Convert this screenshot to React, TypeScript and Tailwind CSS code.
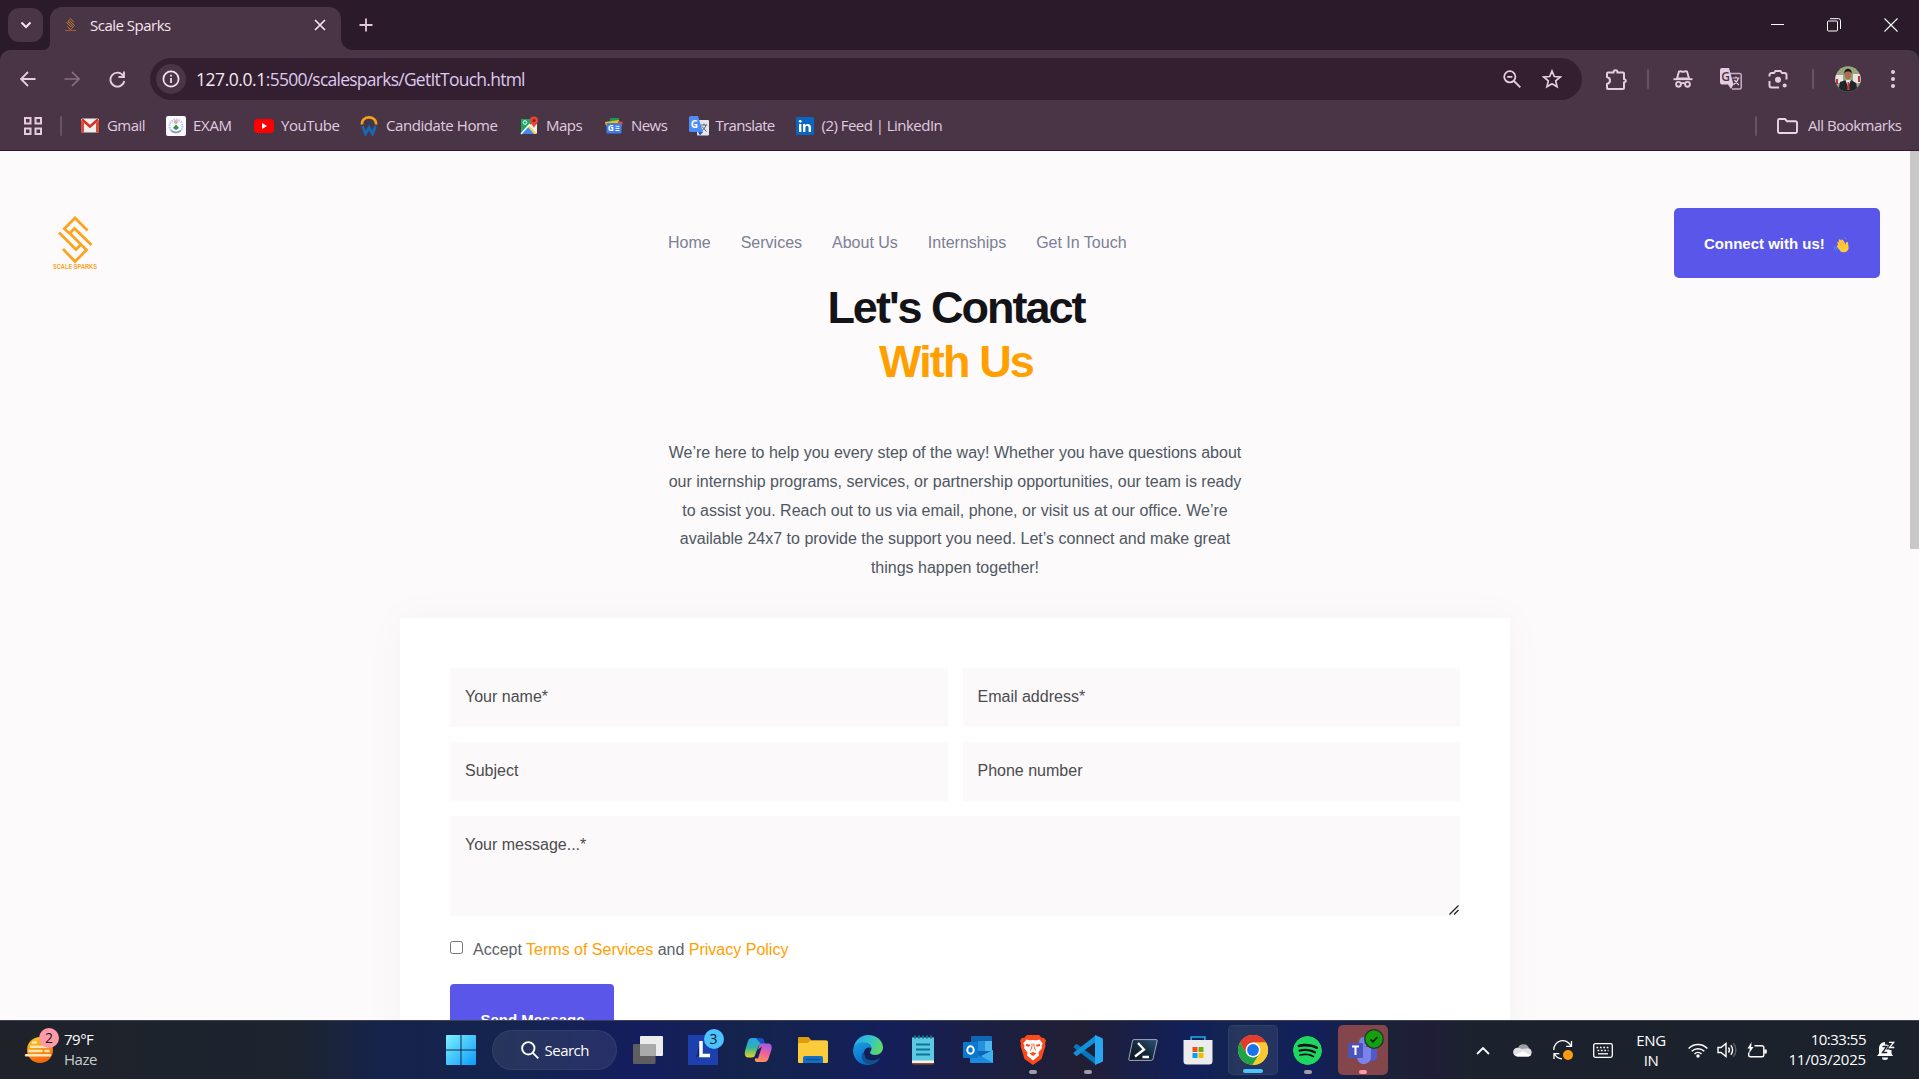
import React from "react";
import type { ReactNode } from "react";
import { SiSpotify } from "react-icons/si";

const SEGOE = "font-['Open_Sans','Noto_Sans',sans-serif]";

/* ---------- brand mark ---------- */

function SparksMark({ className }: { className: string }) {
  return (
    <svg viewBox="0 0 44 54" className={className} fill="none" stroke="#fda21f" strokeWidth="2.700">
      <path d="M34.500 14.500 22 2 11.300 12.700 16.500 17.500" />
      <path d="M6 16.500 23 33.500 27.500 29" />
      <path d="M16.500 17.500 21.500 12.500 38.500 29" />
      <path d="M16.500 17 33.500 34 22 45.500 10 33" />
      <text x="22" y="52.700" textAnchor="middle" fill="#fda21f" stroke="none" fontSize="6.300" fontWeight="700" textLength="44" lengthAdjust="spacingAndGlyphs" fontFamily="Liberation Sans, sans-serif">SCALE SPARKS</text>
    </svg>
  );
}

/* ---------- browser chrome ---------- */

function TabStrip() {
  return (
    <div className="flex h-[50px] shrink-0 items-start bg-[#2b1a29] text-[#f4e4f0]">
      <button className="mt-2 ml-2 flex h-[34px] w-[35px] items-center justify-center rounded-[11px] bg-[#4a3546]">
        <svg viewBox="0 0 12 8" className="h-2 w-3" fill="none" stroke="currentColor" strokeWidth="2"><path d="M1.500 1.500 6 6l4.500-4.500" /></svg>
      </button>
      <div className="flex h-[50px] items-end">
        <div className="h-3 w-[7px] overflow-hidden bg-[#4a3546]"><div className="h-3 w-[7px] rounded-br-[12px] bg-[#2b1a29]" /></div>
      </div>
      <div className="mt-[7px] flex h-[43px] w-[291px] items-center rounded-t-[12px] bg-[#4a3546] pb-2">
        <SparksMark className="ml-[15px] h-[14px] w-[11px]" />
        <span className="mt-[2px] ml-[14px] w-[82px] text-[15px] tracking-[-0.5px] whitespace-nowrap">Scale Sparks</span>
        <svg viewBox="0 0 12 12" className="ml-[142px] h-3 w-3" fill="none" stroke="currentColor" strokeWidth="1.700"><path d="m1 1 10 10M11 1 1 11" /></svg>
      </div>
      <div className="flex h-[50px] items-end">
        <div className="h-3 w-3 bg-[#4a3546]"><div className="h-3 w-3 rounded-bl-[12px] bg-[#2b1a29]" /></div>
      </div>
      <svg viewBox="0 0 14 14" className="mt-[18px] ml-[6px] h-[14px] w-[14px]" fill="none" stroke="#e2c8dc" strokeWidth="1.800"><path d="M7 .5v13M.5 7h13" /></svg>
      <div className="mt-[18px] ml-auto flex h-[13px] items-center text-white">
        <div className="h-px w-[13px] bg-white" />
        <svg viewBox="0 0 14 14" className="ml-[43px] h-[14px] w-[14px]" fill="none" stroke="currentColor"><rect x=".5" y="3" width="10" height="10" rx="1" /><path d="M3 .7h8.500a2 2 0 0 1 2 2V11" /></svg>
        <svg viewBox="0 0 14 14" className="mr-[21px] ml-[43px] h-[14px] w-[14px]" fill="none" stroke="currentColor" strokeWidth="1.100"><path d="m.5.5 13 13M13.500.5l-13 13" /></svg>
      </div>
    </div>
  );
}

function Divider({ className }: { className: string }) {
  return <div className={`h-5 w-[2px] rounded-full bg-[#6b5066] ${className}`} />;
}

function AddressRow() {
  return (
    <div className="flex h-[58px] items-center text-[#e6cce0]">
      <svg viewBox="0 0 16 16" className="ml-[20px] h-4 w-4" fill="none" stroke="currentColor" strokeWidth="1.800"><path d="M15.500 8H1.500M8 1 1 8l7 7" /></svg>
      <svg viewBox="0 0 16 16" className="ml-[28px] h-4 w-4 text-[#896f83]" fill="none" stroke="currentColor" strokeWidth="1.700"><path d="M.5 8h14M8 1l7 7-7 7" /></svg>
      <svg viewBox="0 0 17 17" className="ml-[29px] h-[17px] w-[17px]" fill="none" stroke="currentColor" strokeWidth="1.900"><path d="M14.200 4.600A7 7 0 1 0 15.300 10M15 .5V6H9.500" /></svg>
      <div className="ml-[24px] flex h-[42px] w-[1432px] items-center rounded-full bg-[#331f2f]">
        <div className="ml-[6px] flex h-[30px] w-[30px] items-center justify-center rounded-full bg-[#4a3546]">
          <svg viewBox="0 0 18 18" className="h-[18px] w-[18px]" fill="none" stroke="#f2e2ee" strokeWidth="1.700"><circle cx="9" cy="9" r="7.600" /><path d="M9 8v5M9 4.700v1.800" /></svg>
        </div>
        <span className="mt-px ml-[10px] text-[17.500px] tracking-[-0.75px] whitespace-nowrap text-[#ddc9ee]"><span className="tracking-[-0.45px] text-[#f5e9f4]">127.0.0.1</span>:5500/scalesparks/GetItTouch.html</span>
        <svg viewBox="0 0 18 18" className="ml-auto h-[18px] w-[18px]" fill="none" stroke="currentColor" strokeWidth="1.800"><circle cx="6.800" cy="6.800" r="5.600" /><path d="m11 11 6.300 6.300M4.200 6.800h5.200" /></svg>
        <svg viewBox="0 0 20 20" className="mr-[20px] ml-[21px] h-5 w-5" fill="none" stroke="currentColor" strokeWidth="1.700"><path d="m10 2 2.300 5.500 6 .5-4.600 3.900 1.400 5.900L10 14.700l-5.100 3.100 1.400-5.900L1.700 8l6-.5z" /></svg>
      </div>
      <svg viewBox="0 0 21 21" className="ml-[24px] h-[21px] w-[21px]" fill="none" stroke="currentColor" strokeWidth="2"><path d="M2 3.500h5.500c0-3 4-3 4 0H17a1 1 0 0 1 1 1v5.500c2.500.5 2.500 3 0 3.500v5.500a1 1 0 0 1-1 1H2a1 1 0 0 1-1-1V15c4-1 4-6 0-7V4.500a1 1 0 0 1 1-1z" /></svg>
      <Divider className="ml-[20px]" />
      <svg viewBox="0 0 20 18" className="ml-[24px] h-[18px] w-5" fill="none" stroke="currentColor" strokeWidth="1.900"><path d="M.5 9.200h19" /><path d="M4 8.500 6 1.500c1.600-.8 2.500.3 4 .3s2.400-1.100 4-.3l2 7z" /><circle cx="5.500" cy="14.300" r="2.400" /><circle cx="14.500" cy="14.300" r="2.400" /><path d="M8 13.500q2-1 4 0" /></svg>
      <svg viewBox="0 0 22 22" className="ml-[27px] h-[22px] w-[22px]">
        <path d="M9.500 5.500h10.200a1.500 1.500 0 0 1 1.500 1.500v12.500a1.500 1.500 0 0 1-1.500 1.500H12" fill="none" stroke="#c9afc4" strokeWidth="1.500" />
        <path d="M2 0h7l4.500 16.500H2a2 2 0 0 1-2-2V2a2 2 0 0 1 2-2zM8 16.500h5.500L11 21z" fill="currentColor" />
        <text x="1.300" y="12.800" fontSize="12" fontWeight="600" fill="#4a3546" fontFamily="Open Sans, sans-serif">G</text>
        <path d="M12.500 10h7M16 8.500V10m2.500 0q-1 4-5 6.500m.8-4.500 4.500 5" fill="none" stroke="currentColor" strokeWidth="1.200" />
      </svg>
      <svg viewBox="0 0 20 20" className="ml-[26px] h-5 w-5" fill="none" stroke="currentColor" strokeWidth="2"><path d="M1.500 7.500V6a2 2 0 0 1 2-2H6l1.500-2h5L14 4h2.500a2 2 0 0 1 2 2v4.500M1.500 12v4.500a2 2 0 0 0 2 2H11" /><circle cx="10" cy="10.800" r="3" fill="currentColor" stroke="none" /><circle cx="16.700" cy="16.500" r="2" fill="currentColor" stroke="none" /></svg>
      <Divider className="ml-[24px]" />
      <svg viewBox="0 0 26 26" className="ml-[21px] h-[26px] w-[26px]">
        <clipPath id="avatar"><circle cx="13" cy="13" r="12.700" /></clipPath>
        <g clipPath="url(#avatar)">
          <rect width="26" height="26" fill="#9ca67e" />
          <path d="M0 9h8v8H0zM18 8h8v9h-8z" fill="#e8e6e4" /><path d="M1 13h2v5H1zM23 10h2v6h-2z" fill="#b8323a" />
          <path d="M3 26 5 16l6-2h5l5 3 2 9z" fill="#20252c" /><path d="m10.500 14 2.500 7 3-7z" fill="#e9e3e2" /><path d="M12.500 16h1.600l.6 8h-2.500z" fill="#c43a3c" />
          <ellipse cx="13" cy="8.500" rx="3.500" ry="5" fill="#a96f4f" /><path d="M9 8c0-7 8-7 8 0-1-3-6-4-8 0z" fill="#17120f" />
        </g>
      </svg>
      <svg viewBox="0 0 4 18" className="ml-[30px] h-[18px] w-1" fill="currentColor"><circle cx="2" cy="2" r="2" /><circle cx="2" cy="9" r="2" /><circle cx="2" cy="16" r="2" /></svg>
    </div>
  );
}

function Bookmark({ icon, label, width, text }: { icon: ReactNode; label: string; width: string; text: string }) {
  return (
    <div className={`flex items-center ${width}`}>
      <div className="flex w-[20px] shrink-0 justify-center">{icon}</div>
      <span className={`ml-[7px] whitespace-nowrap ${text}`}>{label}</span>
    </div>
  );
}

const GmailIcon = (
  <svg viewBox="0 0 20 15" className="h-[15px] w-5"><rect x="1" y="0.500" width="18" height="14" rx="1.500" fill="#eee" /><path d="M1 2.500v11q0 1 1 1h2V5zM19 2.500v11q0 1-1 1h-2V5z" fill="#d54b3d" /><path d="m2 1.500 8 7 8-7" fill="none" stroke="#d93025" strokeWidth="2.600" /></svg>
);
const ExamIcon = (
  <svg viewBox="0 0 20 20" className="h-5 w-5"><rect width="20" height="20" rx="2" fill="#fbfbfd" /><circle cx="10" cy="10" r="6.500" fill="none" stroke="#b9c5e6" strokeWidth="2" strokeDasharray="1.500 1" /><circle cx="10" cy="6" r="2" fill="#e7a2b0" /><path d="m10 8.500 3 3.500-3 2-3-2z" fill="#26953b" /><path d="M5 14.500q5 4 10 0" stroke="#7f8fcb" fill="none" strokeWidth="1.500" /></svg>
);
const YouTubeIcon = (
  <svg viewBox="0 0 20 14" className="h-[14px] w-5"><rect width="20" height="14" rx="3.500" fill="#f00" /><path d="M8 4v6l5-3z" fill="#fff" /></svg>
);
const CandidateIcon = (
  <svg viewBox="0 0 18 20" className="h-5 w-[18px]" fill="none"><path d="M2 8.500C1-1 17-1 16 8.500" stroke="#f5a11b" strokeWidth="2.600" /><circle cx="9" cy="7" r="3" fill="#3b3a52" /><path d="m2.500 10 3 8L9 11.500l3.500 6.500 3-8" stroke="#1767b4" strokeWidth="2.800" /></svg>
);
const MapsIcon = (
  <svg viewBox="0 0 19 20" className="h-5 w-[19px]"><path d="M1 3h15v15H1z" fill="#1fa463" /><path d="M1 18 14 5l3 3v9z" fill="#eef1f2" /><path d="m1 18 7-8 8 8z" fill="#4285f4" /><path d="m7 10 7 8h3l-8-9z" fill="#fbd14b" /><path d="m1 18 9-10" stroke="#fff" strokeWidth="1.500" /><circle cx="5" cy="6.500" r="1.800" fill="none" stroke="#fff" /><path d="M14 12c-1-3-4-4-4-7.500a4 4 0 0 1 8 0C18 8 15 9 14 12z" fill="#ea4335" /><circle cx="14" cy="4.500" r="1.500" fill="#7d1f17" /></svg>
);
const NewsIcon = (
  <svg viewBox="0 0 20 18" className="h-[18px] w-5"><path d="M6 1h9v6H6z" fill="#0c9d58" /><path d="m1 5 14-2 1 6H2z" fill="#fbbc04" /><path d="m14 4 5 1-2 6-3-1z" fill="#ea4335" /><rect x="2.500" y="6" width="15" height="10.500" rx="1" fill="#3b7ef0" /><text x="3.800" y="14.300" fontSize="8.500" fontWeight="700" fill="#fff" fontFamily="Open Sans, sans-serif">G</text><path d="M11.500 9.300h4M11.500 11.400h4M11.500 13.500h4" stroke="#fff" /></svg>
);
const TranslateIcon = (
  <svg viewBox="0 0 20 20" className="h-5 w-5"><rect x="8" y="4" width="12" height="15.500" rx="1" fill="#e4e7ea" /><path d="M1.500 0h7.500L14 16H1.500A1.500 1.500 0 0 1 0 14.500v-13A1.500 1.500 0 0 1 1.500 0z" fill="#4e8df5" /><path d="M9 16h5l-3 3.500z" fill="#2b56c6" /><text x="1.800" y="11.500" fontSize="10" fontWeight="700" fill="#fff" fontFamily="Open Sans, sans-serif">G</text><path d="M12 9h6.500M15 7.500V9m2 0q-1 4-4 5.500m0-4 4.500 5" fill="none" stroke="#59636c" /></svg>
);
const LinkedInIcon = (
  <svg viewBox="0 0 18 18" className="h-[18px] w-[18px]"><rect width="18" height="18" rx="1" fill="#0a66c2" /><path d="M3 7h2.400v8H3zM7 7h2.300v1.200C10.500 6.300 15 6.400 15 10.300V15h-2.400v-4.200c0-2.500-3.200-2.300-3.200 0V15H7z" fill="#fff" /><circle cx="4.200" cy="4.300" r="1.400" fill="#fff" /></svg>
);

function BookmarksBar() {
  return (
    <div className="flex h-[42px] items-center pb-[7px] text-[15px] text-[#e0cbe0]">
      <svg viewBox="0 0 18 18" className="ml-[24px] h-[18px] w-[18px]" fill="none" stroke="#e6cce0" strokeWidth="2"><path d="M1 1h5.500v5.500H1zM11.500 1H17v5.500h-5.500zM1 11.500h5.500V17H1zM11.500 11.500H17V17h-5.500z" /></svg>
      <Divider className="ml-[18px]" />
      <div className="ml-[18px] flex items-center">
        <Bookmark icon={GmailIcon} label="Gmail" width="w-[86px]" text="tracking-[-0.55px]" />
        <Bookmark icon={ExamIcon} label="EXAM" width="w-[88px]" text="tracking-[-0.3px]" />
        <Bookmark icon={YouTubeIcon} label="YouTube" width="w-[105px]" text="tracking-[-0.45px]" />
        <Bookmark icon={CandidateIcon} label="Candidate Home" width="w-[160px]" text="tracking-[-0.43px]" />
        <Bookmark icon={MapsIcon} label="Maps" width="w-[85px]" text="tracking-[-0.5px]" />
        <Bookmark icon={NewsIcon} label="News" width="w-[84.500px]" text="tracking-[-0.55px]" />
        <Bookmark icon={TranslateIcon} label="Translate" width="w-[106px]" text="tracking-[-0.65px]" />
        <Bookmark icon={LinkedInIcon} label="(2) Feed | LinkedIn" width="w-[160px]" text="tracking-[-0.53px]" />
      </div>
      <Divider className="ml-auto" />
      <svg viewBox="0 0 21 16" className="ml-[20px] h-4 w-[21px]" fill="none" stroke="#e9d6e5" strokeWidth="1.900"><path d="M2.500 1H8l2 2.200h8.500a1.500 1.500 0 0 1 1.500 1.500v8.800a1.500 1.500 0 0 1-1.500 1.500h-16A1.500 1.500 0 0 1 1 13.500v-11A1.500 1.500 0 0 1 2.500 1z" /></svg>
      <span className="mr-[16px] ml-[10px] w-[95px] tracking-[-0.5px] whitespace-nowrap">All Bookmarks</span>
    </div>
  );
}

/* ---------- web page ---------- */

function WavingHand() {
  return (
    <svg viewBox="0 0 16 16" className="h-4 w-4">
      <path d="M1 9.500q0 3 3 5M3 9.500q0 1.500 1.500 3M11 .8q1.500 0 2.500 1.500" stroke="#4a9bea" fill="none" strokeWidth=".9" />
      <path d="M4.500 6c-.6-1 .8-1.700 1.500-.8L5.800 3.500c-.3-1.200 1.200-1.700 1.800-.6l.5.600c0-1.200 1.400-1.500 1.900-.4l3 4.500.2-1.900c.2-1.300 1.800-1.200 1.900.2l.5 5c.1 3.800-5.600 6.100-8.300 3L4 9.700c-.7-1 .3-1.800 1.200-1.200z" fill="#ffc83d" />
      <path d="m6 5.200 3 4M8.100 3.500l3 4.500" stroke="#e39d1c" strokeWidth=".5" />
    </svg>
  );
}

function Field({ label, tall }: { label: string; tall?: boolean }) {
  return tall ? (
    <div className="relative col-span-2 h-[100px] bg-[#fbf9fa] px-[15px] pt-[18px] leading-[22px]">
      {label}
      <svg viewBox="0 0 10 10" className="absolute right-[1px] bottom-[1px] h-[10px] w-[10px]" stroke="#222" strokeWidth="1.300"><path d="m.5 9.500 9-9M5 9.500 9.500 5" /></svg>
    </div>
  ) : (
    <div className="h-[59px] bg-[#fbf9fa] px-[15px] pt-[18px] leading-[22px]">{label}</div>
  );
}

function WebPage() {
  return (
    <div className="flex min-h-0 flex-1 bg-[#fcfafb] font-['Liberation_Sans',Arial,sans-serif]">
      <main className="flex w-[1910px] flex-col items-center overflow-hidden">
        <header className="flex h-[133px] w-full shrink-0 items-start pt-[57px]">
          <SparksMark className="mt-[8px] ml-[53px] h-[54px] w-[44px]" />
          <nav className="mt-[23px] ml-[571px] flex gap-[30px] text-[16px] leading-6 text-[#7b8095]">
            <a>Home</a><a>Services</a><a>About Us</a><a>Internships</a><a>Get In Touch</a>
          </nav>
          <button className="mr-[30px] ml-auto flex h-[70px] w-[206px] items-center rounded-[5px] bg-[#5956e9] pl-[30px] text-[15px] font-bold text-white">
            <span className="pt-[2px] whitespace-nowrap">Connect with us!</span>
            <span className="mt-[3px] ml-[8px]"><WavingHand /></span>
          </button>
        </header>
        <h1 className="mt-[-3px] shrink-0 pl-[2px] text-center text-[45px] leading-[54px] font-bold tracking-[-2px] text-[#141418]">
          Let's Contact<br /><span className="tracking-[-1.9px] text-[#ffa000]">With Us</span>
        </h1>
        <p className="mt-[50px] w-[600px] shrink-0 text-center text-[16px] leading-[28.800px] text-[#4f5762]">
          We’re here to help you every step of the way! Whether you have questions about<br />
          our internship programs, services, or partnership opportunities, our team is ready<br />
          to assist you. Reach out to us via email, phone, or visit us at our office. We’re<br />
          available 24x7 to provide the support you need. Let’s connect and make great<br />
          things happen together!
        </p>
        <section className="mt-[35px] h-[560px] w-[1110px] shrink-0 bg-white p-[50px] shadow-[0_0_40px_rgba(0,0,0,0.035)]">
          <div className="grid grid-cols-2 gap-[15px] text-[16px] text-[#4b4b50]">
            <Field label="Your name*" />
            <Field label="Email address*" />
            <Field label="Subject" />
            <Field label="Phone number" />
            <Field label="Your message...*" tall />
          </div>
          <label className="mt-[20px] flex items-center text-[16px] leading-[28px] text-[#5c6068]">
            <span className="mb-[5px] h-[13px] w-[13px] rounded-[2.500px] border border-[#767676] bg-white" />
            <span className="ml-[10px]">Accept <a className="text-[#ffa000]">Terms of Services</a> and <a className="text-[#ffa000]">Privacy Policy</a></span>
          </label>
          <button className="mt-[20px] flex h-[70px] w-[164px] items-center justify-center rounded-[4px] bg-[#5956e9] pt-[2px] pl-px text-[15px] font-bold text-white">Send Message</button>
        </section>
      </main>
      <div className="w-[9px] shrink-0"><div className="h-[398px] bg-[#c9c8c9]" /></div>
    </div>
  );
}

/* ---------- taskbar ---------- */

function Slot({ children, tone, mark }: { children: ReactNode; tone?: string; mark?: string }) {
  return (
    <div className={`relative mx-[2.500px] flex h-[50px] w-[50px] items-center justify-center rounded-[5px] ${tone ?? ""}`}>
      {children}
      {mark && <div className={`absolute bottom-[1px] h-1 rounded-full ${mark}`} />}
    </div>
  );
}

function TaskIcons() {
  return (
    <div className="ml-[3.500px] flex">
      <Slot>
        <svg viewBox="0 0 30 28" className="h-7 w-[30px]"><rect x="7" width="23" height="20" rx="1" fill="#ececec" /><rect y="8" width="22.500" height="20" rx="1" fill="#5f5e5e" /><path d="M7 8h15.500v12H7z" fill="#aaa" /></svg>
      </Slot>
      <Slot>
        <svg viewBox="0 0 30 30" className="h-[30px] w-[30px]"><rect width="30" height="30" fill="#1e3fae" /><path d="m12 7-4 16 4-3z" fill="#0f2b50" /><path d="M13 6v14.500h9" fill="none" stroke="#fff" strokeWidth="3.500" /></svg>
        <span className="absolute top-[4px] right-[4px] flex h-5 w-5 items-center justify-center rounded-full bg-[#4cc2ff] text-[14px] leading-none text-[#0d1b2a]">3</span>
      </Slot>
      <Slot>
        <svg viewBox="0 0 28 26" className="h-[26px] w-7">
          <defs>
            <linearGradient id="cpA" x1="0" y1="0" x2="0" y2="1"><stop stopColor="#2a9df0" /><stop offset=".5" stopColor="#2fb7a0" /><stop offset="1" stopColor="#f0d21a" /></linearGradient>
            <linearGradient id="cpB" x1=".6" y1="0" x2=".3" y2="1"><stop stopColor="#a05be8" /><stop offset=".5" stopColor="#f0609a" /><stop offset="1" stopColor="#ff9a57" /></linearGradient>
          </defs>
          <path d="M8 1h8q2.500 0 3 2.500L20 7h-2q-3 0-4 3l-2.500 8q-1 2.500-4 2.500H4Q0 20 1 14L4 4Q5 1 8 1z" fill="url(#cpA)" />
          <path d="M12 1h5q2.500 0 3 2.500L21 7h-4z" fill="#1c4fc4" />
          <path d="M20 25h-7q-2.500 0-2-3l3.500-12Q15.500 6.500 18 6.500h6q4.500 0 3.500 6l-3 9Q23.500 25 20 25z" fill="url(#cpB)" /><path d="m13 13-3 8 4 .5 4-12z" fill="#16235c" />
        </svg>
      </Slot>
      <Slot>
        <svg viewBox="0 0 30 27" className="h-[27px] w-[30px]"><path d="M1 0h9.500l3 3.500H28v8H0V1a1 1 0 0 1 1-1z" fill="#dc9e0b" /><path d="M12 4 10 6H0v19a1 1 0 0 0 1 1h28a1 1 0 0 0 1-1V4.500L29 3.500H13z" fill="#fccb3c" /><path d="M5 26v-5q0-2 2-2h16q2 0 2 2v5z" fill="#0f70c4" /><path d="M8 22.500h14" stroke="#0a4c94" strokeWidth="1.200" /></svg>
      </Slot>
      <Slot>
        <svg viewBox="0 0 30 30" className="h-[30px] w-[30px]">
          <defs>
            <linearGradient id="eA" x1="0" y1=".3" x2="1" y2=".6"><stop stopColor="#2aa8ea" /><stop offset=".5" stopColor="#2fc4d0" /><stop offset="1" stopColor="#62dd5b" /></linearGradient>
            <linearGradient id="eB" x1="0" y1="0" x2=".4" y2="1"><stop stopColor="#1b9de2" /><stop offset="1" stopColor="#0a6ccb" /></linearGradient>
          </defs>
          <path d="M.5 13C2 5 8 0 15 0c9 0 15 6 15 12.500 0 4.500-3.500 7.500-8 7.500-3 0-5-1-5-2.500 0-1 1.500-1.500 1.500-4 0-3.500-3.500-5.500-7.500-5.500-5 0-8.500 2-10.500 5z" fill="url(#eA)" />
          <path d="M0 15C1 10 5 7.500 10 7.500c4.500 0 8.500 2.500 8.500 6-1.500-2-7.500-1-7.500 4.500 0 6 5 11 10 10.500C10 33 0 26 0 15z" fill="url(#eB)" />
          <path d="M11 17c-1 8 8 11 16.500 6-3 5-8 7-12 6.500C7 27 8 18 11 17z" fill="#11518f" />
        </svg>
      </Slot>
      <Slot>
        <svg viewBox="0 0 22 30" className="h-[30px] w-[22px]"><path d="M0 2.500h22V28a1.500 1.500 0 0 1-1.500 1.500h-19A1.500 1.500 0 0 1 0 28z" fill="#9c4f1d" /><path d="M0 2.500h22V26H0z" fill="#5cc8e2" /><path d="M0 25.500h22V28H0z" fill="#f1f1f1" /><path d="M4 9.500h14M4 14.500h14M4 19.500h14" stroke="#0b7597" strokeWidth="2" /><path d="M3 .5v3M7 .5v3M11 .5v3M15 .5v3M19 .5v3" stroke="#0b7597" strokeWidth="2" /></svg>
      </Slot>
      <Slot>
        <svg viewBox="0 0 30 28" className="h-7 w-[30px]"><rect x="8" width="21" height="22" rx="1" fill="#1066b5" /><path d="M15 5h14v10H15z" fill="#2590dc" /><path d="M22 5h7v10h-7z" fill="#50b8f0" /><path d="M7 14l11 7 12-7v12a1 1 0 0 1-1 1H8a1 1 0 0 1-1-1z" fill="#1b8ade" /><path d="m18 20 12 7V14z" fill="#41b0ee" /><rect y="6" width="15" height="16" rx="1" fill="#0b78d0" /><ellipse cx="7.500" cy="14" rx="3.200" ry="3.700" fill="none" stroke="#fff" strokeWidth="2" /></svg>
      </Slot>
      <Slot mark="w-2 bg-[#9b9da8]">
        <svg viewBox="0 0 26 30" className="h-[30px] w-[26px]">
          <path d="M7 0h12l3 3 2-.2 2 3-1 3 .5 2-4 13.200L13 30 4.500 24 .5 10.800 1 8.800 0 5.800l2-3L4 3z" fill="#fb4a1c" />
          <path d="m13 5 3.500.3 3-.8 3.300 4-1.300 2 .5 2.500-3.500 4.500.5 3-6 5-6-5 .5-3L4 13l.5-2.500-1.300-2 3.300-4 3 .8z" fill="#fff" />
          <path d="m6 9 4.500.8-1.500 2-3-.8zM20 9l-4.500.8 1.500 2 3-.8zM9.500 18.500 13 17l3.500 1.500L13 21z" fill="#fb4a1c" />
          <path d="M12 8.500v3l-1.500 4M14 8.500v3l1.500 4" stroke="#fb4a1c" fill="none" strokeWidth=".9" />
        </svg>
      </Slot>
      <Slot mark="w-2 bg-[#9b9da8]">
        <svg viewBox="0 0 30 30" className="h-[30px] w-[30px]"><path d="m1 11 2-1.700q.8-.5 1.600.1L22.500 23v6.500L1 12.800q-.8-.9 0-1.800z" fill="#0877b9" /><path d="m1 19 2 1.700q.8.500 1.600-.1L22.500 7V.5L1 17.200q-.8.900 0 1.800z" fill="#1191d8" /><path d="M22 0 29 3q1 .5 1 1.500v21q0 1-1 1.500l-7 3z" fill="#27a7f1" /></svg>
      </Slot>
      <Slot>
        <svg viewBox="0 0 30 22" className="h-[22px] w-[30px]"><defs><linearGradient id="ps" x1="0" y1="1" x2="1" y2="0"><stop stopColor="#0e151c" /><stop offset=".5" stopColor="#142a3a" /><stop offset="1" stopColor="#30527a" /></linearGradient></defs><path d="M6 .6h22q1.500 0 1.200 1.200L25 20q-.4 1.400-1.800 1.400H1.800Q.5 21.400.8 20L4.500 2q.3-1.400 1.500-1.400z" fill="url(#ps)" stroke="#9cabc0" strokeWidth="1" /><path d="m10 4 6 6.500-9 7M14.500 18H21" fill="none" stroke="#fff" strokeWidth="2.300" /></svg>
      </Slot>
      <Slot>
        <svg viewBox="0 0 30 30" className="h-[30px] w-[30px]"><path d="M8.200 6V2h13.600v4" fill="none" stroke="#22a6ee" strokeWidth="1.700" /><path d="M.5 5h29v21q0 3.500-3.500 3.500H4Q.5 29.500.5 26z" fill="#ececec" /><path d="M9.500 12h5v5h-5z" fill="#f25022" /><path d="M15.500 12h5v5h-5z" fill="#6aae0c" /><path d="M9.500 18h5v5h-5z" fill="#00a4ef" /><path d="M15.500 18h5v5h-5z" fill="#ffb400" /></svg>
      </Slot>
      <Slot tone="bg-white/8 border border-white/5" mark="w-5 bg-[#4cc2ff]">
        <svg viewBox="0 0 30 30" className="h-[30px] w-[30px]"><circle cx="15" cy="15" r="15" fill="#fcc934" /><path d="M2 7.500A15 15 0 0 1 28 7.500H15L8.500 18.800z" fill="#e33b2e" /><path d="M2 7.500a15 15 0 0 0 12.500 22.500L21.500 18.800 8.500 18.800z" fill="#1ea446" /><path d="M14.500 30A15 15 0 0 0 28 7.500H15l6.500 11.300z" fill="#fcc934" /><circle cx="15" cy="15" r="7.400" fill="#fff" /><circle cx="15" cy="15" r="5.900" fill="#1a73e8" /></svg>
      </Slot>
      <Slot mark="w-2 bg-[#9b9da8]"><SiSpotify className="h-[29px] w-[29px] rounded-full bg-[#10131c] text-[#1ed760]" /></Slot>
      <Slot tone="bg-[#82464b]" mark="w-2 bg-[#ff9aa6]">
        <svg viewBox="0 0 30 28" className="h-7 w-[30px]"><circle cx="24" cy="7" r="4" fill="#5059c9" /><path d="M18 11h11v9q0 5-5 5h-4z" fill="#5059c9" /><circle cx="16" cy="6" r="5" fill="#7b83eb" /><path d="M9 11h14v9a7 7 0 0 1-14 2z" fill="#7b83eb" /><rect y="7" width="15" height="15" rx="1" fill="#4b53bc" /><path d="M4 10.500h7M7.500 10.500v8.500" stroke="#fff" strokeWidth="2" /></svg>
        <svg viewBox="0 0 20 20" className="absolute top-[4px] right-[4px] h-5 w-5"><circle cx="10" cy="10" r="9.300" fill="#13a10e" stroke="#263127" strokeWidth="1.300" /><path d="m6.500 10.300 2.500 2.400 4.500-4.700" fill="none" stroke="#12240f" strokeWidth="1.700" /></svg>
      </Slot>
    </div>
  );
}

function SystemTray() {
  return (
    <div className="ml-auto flex items-center text-white">
      <svg viewBox="0 0 14 9" className="h-[9px] w-[14px]" fill="none" stroke="currentColor" strokeWidth="1.800"><path d="m1 8 6-6 6 6" /></svg>
      <svg viewBox="0 0 20 14" className="ml-[23px] h-[14px] w-5"><path d="M5 4.500a6 6 0 0 1 11 .5L10 10z" fill="#9b9ea2" /><path d="M4.500 13.500a4.200 4.200 0 0 1 0-8.800q2-.2 4 1.300l7-.8a4.300 4.300 0 0 1 0 8.300z" fill="#e0e0e2" /><path d="M2 12 10 8l8 4.500-2.500 1h-11z" fill="#fff" /></svg>
      <svg viewBox="0 0 20 20" className="ml-[20px] h-5 w-5" fill="none" stroke="currentColor" strokeWidth="1.300"><path d="M.8 10A9 9 0 0 1 18 6M18.500 1v5.300h-5.300M1 19v-5.300h5.300M1.500 14A9 9 0 0 0 9 18.800" /><circle cx="15" cy="15" r="5" fill="#ff9b0f" stroke="none" /></svg>
      <svg viewBox="0 0 20 15" className="ml-[20px] h-[15px] w-5" fill="none" stroke="currentColor" strokeWidth="1.300"><rect x=".7" y=".7" width="18.600" height="13.600" rx="1.700" /><path d="M3.500 4.500h13M4.500 7.500h11" strokeWidth="1.600" strokeDasharray="1.700 1.700" /><path d="M5 10.800h10" /></svg>
      <div className="ml-[22px] w-[32px] text-center text-[15px] leading-5 tracking-[-0.4px]">ENG<br />IN</div>
      <svg viewBox="0 0 20 16" className="ml-[21px] h-4 w-5" fill="none" stroke="currentColor" strokeWidth="1.500"><path d="M.6 6.500a13 13 0 0 1 18.800 0M3.700 9.300a9 9 0 0 1 12.600 0M6.500 12a5 5 0 0 1 7 0" /><circle cx="10" cy="14" r="1.700" fill="currentColor" stroke="none" /></svg>
      <svg viewBox="0 0 20 16" className="ml-[9px] h-4 w-5" fill="none" stroke="currentColor" strokeWidth="1.400"><path d="M1 5.500h3l5-4v13l-5-4H1zM11.500 5.500a4 4 0 0 1 0 5M13.800 3.300a7 7 0 0 1 0 9.400" /><path d="M16.300 1.300a10 10 0 0 1 0 13.400" stroke="#5c626b" /></svg>
      <svg viewBox="0 0 20 17" className="ml-[10px] h-[17px] w-5" fill="none" stroke="currentColor" strokeWidth="1.400"><path d="M7.500 3.700h7.500a1.800 1.800 0 0 1 1.800 1.800v7.500a1.800 1.800 0 0 1-1.800 1.800H3.500A1.800 1.800 0 0 1 1.700 13V10.500" /><path d="M18.500 7.500v4" strokeWidth="2.500" /><path d="M4.500 0 .5 6.500h2.300L2 11.500l4.500-6.500H4.200z" fill="currentColor" stroke="none" /></svg>
      <div className="mb-[3px] ml-[18px] w-[81px] text-right text-[15px] leading-5 tracking-[-0.2px] whitespace-nowrap"><span className="tracking-[-0.5px]">10:33:55</span><br />11/03/2025</div>
      <svg viewBox="0 0 18 19" className="mr-[24px] ml-[11px] h-[19px] w-[18px]"><path d="M8 1a6 6 0 0 0-6 6v5.500L0 15h16l-1.500-2.500V9H8z" fill="#fff" /><path d="M5 16.500h6a3 2.500 0 0 1-6 0z" fill="#fff" /><circle cx="8.800" cy="7.500" r="4" fill="#fff" /><path d="M5.500 5.500h4.300L5.500 11.500h4.700" stroke="#1b222c" strokeWidth="1.400" fill="none" /><path d="M11 1h5.500L12 7h5" stroke="#1b222c" strokeWidth="3" fill="none" /><path d="M12 1.300h4.700L12.500 6.500h4.800" stroke="#fff" strokeWidth="1.300" fill="none" /></svg>
    </div>
  );
}

function Taskbar() {
  return (
    <footer className="flex h-[59px] shrink-0 items-center border-t border-[#3d434f] bg-[linear-gradient(90deg,#1f2229_0px,#1c2430_300px,#16234b_380px,#14244f_500px,#151d5e_640px,#14244c_750px,#141f5b_880px,#1b1f42_990px,#211e34_1080px,#1b1f44_1120px,#11205a_1190px,#14254f_1240px,#121f5c_1310px,#1b2238_1380px,#1f1d36_1430px,#1b222d_1470px,#1b222c_1919px)]">
      <div className="relative ml-[24px] h-[40px] w-[40px]">
        <svg viewBox="0 0 30 28" className="absolute top-[6px] left-0 h-7 w-[30px]"><defs><linearGradient id="sun" x1="0" y1="0" x2=".3" y2="1"><stop stopColor="#fcd01c" /><stop offset="1" stopColor="#f5680f" /></linearGradient></defs><circle cx="16" cy="14" r="13" fill="url(#sun)" /><path d="M9 6.500h3M7 10.800h16M5.500 15h12M21.500 15h3M2 19.200h24" stroke="#fbe6b8" strokeWidth="2.500" strokeLinecap="round" /></svg>
        <span className="absolute top-[-2px] left-[15px] flex h-5 w-5 items-center justify-center rounded-full bg-[#ff9aa6] text-[14px] leading-none text-[#151515]">2</span>
      </div>
      <div className="mb-[3px] w-[60px] text-[15px] leading-5 tracking-[-0.5px] text-white">79°F<br /><span className="text-[#c9cbce]">Haze</span></div>
      <svg viewBox="0 0 30 30" className="ml-[321.500px] h-[30px] w-[30px]"><defs><linearGradient id="win" x1="0" y1="0" x2="1" y2="1"><stop stopColor="#7df1fd" /><stop offset="1" stopColor="#0c9bfb" /></linearGradient></defs><path d="M0 1q0-1 1-1h13.500v14.500H0zM15.500 0H29q1 0 1 1v13.500H15.500zM0 15.500h14.500V30H1q-1 0-1-1zM15.500 15.500H30V29q0 1-1 1H15.500z" fill="url(#win)" /></svg>
      <div className="ml-[16px] flex h-[40px] w-[125px] items-center rounded-full border border-white/5 bg-white/8 text-white">
        <svg viewBox="0 0 18 18" className="ml-[28px] h-[18px] w-[18px]" fill="none" stroke="currentColor" strokeWidth="1.900"><circle cx="7.300" cy="7.300" r="6.200" /><path d="m11.800 11.800 5.500 5.500" /></svg>
        <span className="ml-[6px] text-[15px] tracking-[-0.5px]">Search</span>
      </div>
      <TaskIcons />
      <SystemTray />
    </footer>
  );
}

export default function App() {
  return (
    <div className={`flex h-[1079px] w-[1919px] flex-col overflow-hidden bg-[#2b1a29] ${SEGOE}`}>
      <TabStrip />
      <div className="h-[101px] shrink-0 rounded-t-[10px] border-b border-[#3a1430] bg-[#4a3546]">
        <AddressRow />
        <BookmarksBar />
      </div>
      <WebPage />
      <Taskbar />
    </div>
  );
}
